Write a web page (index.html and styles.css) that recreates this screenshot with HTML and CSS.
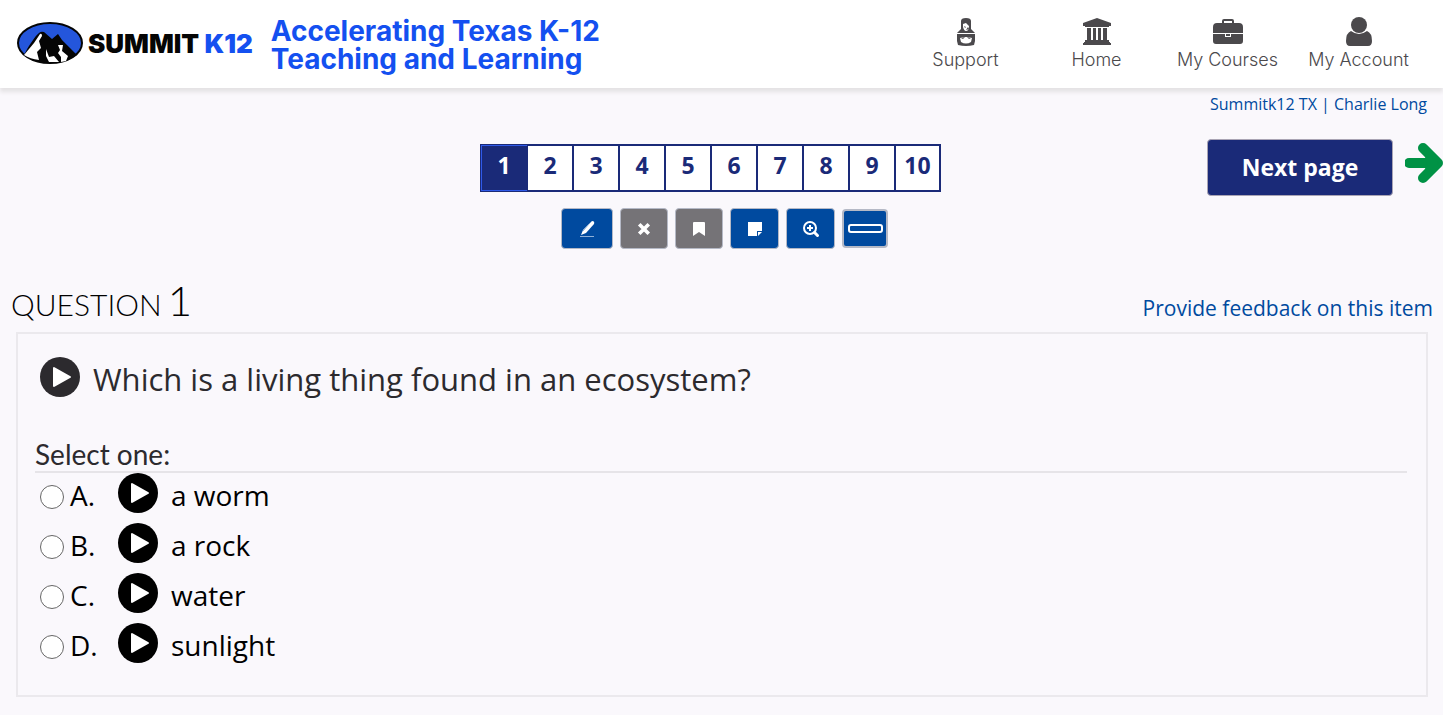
FILE: index.html
```
<!DOCTYPE html>
<html lang="en">
<head>
    <meta charset="UTF-8">
    <meta name="viewport" content="width=device-width, initial-scale=1.0">
    <title>Summit K12 - Question 1</title>
    <link rel="stylesheet" href="styles.css">
</head>
<body>

    <!-- Shared icon shapes -->
    <svg class="sprite" aria-hidden="true">
        <symbol id="icon-play" viewBox="0 0 40 40">
            <circle cx="20" cy="20" r="20" fill="currentColor"/>
            <path d="M14 11v18l16-9z" fill="#fff" stroke="#fff" stroke-width="2" stroke-linejoin="round"/>
        </symbol>
    </svg>

    <header class="header">
        <a href="#" class="brand">
            <svg class="brand-logo" viewBox="0 0 66 44" aria-hidden="true">
                <ellipse cx="33" cy="21" rx="32" ry="20" fill="#2456dc" stroke="#050505" stroke-width="2"/>
                <path d="M7 33C11 25 18 14 22 11Q24 9 27 10L35 17L41 12L45 18L60 33Q47 42 33 41Q16 41 7 33Z" fill="#050505"/>
                <path d="M7 33L17 21L23 12Q25 11 25 14L22 19L24 26L20 30L22 38Q13 37 7 33Z" fill="#fff"/>
                <path d="M29 27L32 35L37 34L42 40L32 40L29 34Z" fill="#fff"/>
                <path d="M41 23L46 23L45 29L51 34L49 39L44 40L44 35L41 31L43 28Z" fill="#fff"/>
            </svg>
            <span class="brand-name">SUMMIT <span class="brand-accent">K12</span></span>
        </a>
        <p class="tagline">Accelerating Texas K-12<br>Teaching and Learning</p>

        <nav class="main-nav">
            <a href="#">
                <svg viewBox="0 0 30 30" aria-hidden="true">
                    <path fill="currentColor" fill-rule="evenodd" d="M10 4Q10 1 15 1Q20 1 20 4L20 12L24 16H6L10 12ZM12 7V10Q13 14 15 14Q18 14 18 9L15 6Z"/>
                    <path fill="currentColor" d="M13 9l2 1-1 1zM17 10l1 2-3 1z"/>
                    <path fill="currentColor" fill-rule="evenodd" d="M6 17H24V24L23 28Q15 30 7 28L6 24ZM9 21L10 25Q15 28 20 25L21 21Q15 19 9 21Z"/>
                    <path fill="currentColor" d="M10 21l4-1-2 2zM20 21l-4-1 2 2z"/>
                </svg>
                Support
            </a>
            <a href="#">
                <svg viewBox="0 0 30 30" aria-hidden="true">
                    <path fill="currentColor" d="M15 1L29 6V9H27V10H3V9H1V6ZM5 11h4v12h2V11h3v12h2V11h3v12h2V11h4v12h2v2H3v-2h2zM2 25h26v1h1v2H1v-2h1z"/>
                </svg>
                Home
            </a>
            <a href="#">
                <svg viewBox="0 0 30 30" aria-hidden="true">
                    <path fill="currentColor" fill-rule="evenodd" d="M9 6V4Q9 2 11 2H19Q21 2 21 4V6H26Q30 6 30 10V16H0V10Q0 6 4 6ZM11 4V6H19V4Z"/>
                    <path fill="currentColor" d="M0 17H12V20H18V17H30V24Q30 27 27 27H3Q0 27 0 24ZM13 17h4v2h-4z"/>
                </svg>
                My Courses
            </a>
            <a href="#">
                <svg viewBox="0 0 30 30" aria-hidden="true">
                    <circle cx="15" cy="8" r="8" fill="currentColor"/>
                    <path fill="currentColor" d="M7 14Q15 20 23 14Q28 16 28 24Q28 29 24 29H6Q2 29 2 24Q2 16 7 14Z"/>
                </svg>
                My Account
            </a>
        </nav>
    </header>

    <div class="user-links">
        <a href="#">Summitk12 TX</a> | <a href="#">Charlie Long</a>
    </div>

    <div class="quiz-bar">
        <div class="quiz-controls">
            <div class="pages">
                <button type="button" class="active">1</button>
                <button type="button">2</button>
                <button type="button">3</button>
                <button type="button">4</button>
                <button type="button">5</button>
                <button type="button">6</button>
                <button type="button">7</button>
                <button type="button">8</button>
                <button type="button">9</button>
                <button type="button">10</button>
            </div>
            <div class="tools">
                <button type="button" class="tool" aria-label="Highlight">
                    <svg viewBox="0 0 18 18" aria-hidden="true">
                        <path d="M14 1Q17 1 16 4L8 13L3 15L5 10Z" fill="#fff"/>
                        <path d="M5 11l6-7" stroke="#8fb0d8" stroke-width="1"/>
                        <path d="M2 16.500h14" stroke="#8fb0d8" stroke-width="1"/>
                    </svg>
                </button>
                <button type="button" class="tool gray" aria-label="Clear">
                    <svg viewBox="0 0 18 18" aria-hidden="true">
                        <path d="M5.500 5.500l7 7M12.500 5.500l-7 7" stroke="#fff" stroke-width="3.600" stroke-linecap="square"/>
                    </svg>
                </button>
                <button type="button" class="tool gray" aria-label="Bookmark">
                    <svg viewBox="0 0 18 18" aria-hidden="true">
                        <path d="M4 2h10q1 0 1 1v13l-6-4-6 4V3q0-1 1-1z" fill="#fff"/>
                    </svg>
                </button>
                <button type="button" class="tool" aria-label="Note">
                    <svg viewBox="0 0 18 18" aria-hidden="true">
                        <path d="M2 2h14v9h-5v5H2zM12 12h4l-4 4z" fill="#fff"/>
                    </svg>
                </button>
                <button type="button" class="tool" aria-label="Zoom in">
                    <svg viewBox="0 0 18 18" aria-hidden="true">
                        <circle cx="8" cy="8" r="6" fill="none" stroke="#fff" stroke-width="2"/>
                        <path d="M8 5v6M5 8h6" stroke="#fff" stroke-width="2"/>
                        <path d="M12.500 12.500l3 3" stroke="#fff" stroke-width="3" stroke-linecap="round"/>
                    </svg>
                </button>
                <button type="button" class="tool line-reader" aria-label="Line reader">
                    <span class="reader-bar"></span>
                </button>
            </div>
        </div>
        <div class="next">
            <button type="button" class="next-button">Next page</button>
            <svg class="next-arrow" viewBox="0 0 38 40" aria-hidden="true">
                <path d="M4 20h28M18 5l15 15-15 15" fill="none" stroke="#009245" stroke-width="10" stroke-linecap="round" stroke-linejoin="round"/>
                <path d="M18 7l16 13-16 13 4-13z" fill="#009245"/>
            </svg>
        </div>
    </div>

    <main>
        <div class="question-header">
            <h1>QUESTION <span>1</span></h1>
            <a href="#">Provide feedback on this item</a>
        </div>

        <form class="question">
            <div class="question-text">
                <button type="button" class="play" aria-label="Play question"><svg aria-hidden="true"><use href="#icon-play"/></svg></button>
                <p>Which is a living thing found in an ecosystem?</p>
            </div>

            <fieldset class="answers">
                <legend>Select one:</legend>
                <div class="answer">
                    <input type="radio" name="answer" id="answer-a">
                    <label for="answer-a" class="letter">A.</label>
                    <button type="button" class="play" aria-label="Play answer A"><svg aria-hidden="true"><use href="#icon-play"/></svg></button>
                    <label for="answer-a">a worm</label>
                </div>
                <div class="answer">
                    <input type="radio" name="answer" id="answer-b">
                    <label for="answer-b" class="letter">B.</label>
                    <button type="button" class="play" aria-label="Play answer B"><svg aria-hidden="true"><use href="#icon-play"/></svg></button>
                    <label for="answer-b">a rock</label>
                </div>
                <div class="answer">
                    <input type="radio" name="answer" id="answer-c">
                    <label for="answer-c" class="letter">C.</label>
                    <button type="button" class="play" aria-label="Play answer C"><svg aria-hidden="true"><use href="#icon-play"/></svg></button>
                    <label for="answer-c">water</label>
                </div>
                <div class="answer">
                    <input type="radio" name="answer" id="answer-d">
                    <label for="answer-d" class="letter">D.</label>
                    <button type="button" class="play" aria-label="Play answer D"><svg aria-hidden="true"><use href="#icon-play"/></svg></button>
                    <label for="answer-d">sunlight</label>
                </div>
            </fieldset>
        </form>
    </main>

</body>
</html>
```
FILE: styles.css
```
* {
    box-sizing: border-box;
}

body {
    margin: 0;
    background: #faf8fc;
    color: #000;
    font-family: "Open Sans", sans-serif;
}

a {
    color: #004a9f;
    text-decoration: none;
}

button {
    padding: 0;
    font-family: inherit;
    cursor: pointer;
}

.sprite {
    display: none;
}

/* Header */
.header {
    display: flex;
    align-items: center;
    height: 88px;
    padding: 0 19px 0 17px;
    background: #fff;
    box-shadow: 0 4px 4px #e4e2e4;
}

.brand {
    display: flex;
    align-items: center;
    gap: 5px;
}

.brand-logo {
    width: 66px;
    height: 44px;
}

.brand-name {
    color: #050505;
    font-family: Inter, sans-serif;
    font-size: 26px;
    font-weight: 900;
    line-height: 32px;
    white-space: nowrap;
}

.brand-accent {
    color: #1450f0;
}

.tagline {
    margin: 2px 0 0 18px;
    color: #1450f0;
    font-family: Inter, sans-serif;
    font-size: 28px;
    font-weight: 700;
    line-height: 28px;
    white-space: nowrap;
}

.main-nav {
    display: flex;
    margin-left: auto;
}

.main-nav a {
    display: flex;
    flex-direction: column;
    align-items: center;
    width: 131px;
    padding-top: 2px;
    color: #4b494c;
    font-family: Inter, sans-serif;
    font-size: 18px;
    font-weight: 300;
    line-height: 26px;
    white-space: nowrap;
}

.main-nav svg {
    width: 30px;
    height: 30px;
}

.user-links {
    padding: 6px 16px 0 0;
    color: #004a9f;
    font-size: 16px;
    line-height: 20px;
    text-align: right;
}

/* Page numbers, tools and next button */
.quiz-bar {
    display: grid;
    grid-template-columns: 1fr auto 1fr;
    padding-top: 25px;
}

.quiz-controls {
    grid-column: 2;
    margin: 5px 22px 0 0;
}

.pages {
    display: flex;
    border: 2px solid #1a2a78;
}

.pages button {
    width: 46px;
    height: 44px;
    padding-bottom: 6px;
    border: 0;
    border-left: 2px solid #1a2a78;
    background: #fff;
    color: #1a2a78;
    font-size: 23px;
    font-weight: 700;
}

.pages button:first-child {
    width: 44px;
    border-left: 0;
}

.pages button:last-child {
    width: 45px;
}

.pages .active {
    background: #1a2a78;
    color: #fff;
    box-shadow: 0 0 0 1px #2f5ae8;
}

.tools {
    display: flex;
    justify-content: center;
    align-items: center;
    gap: 7px;
    margin: 16px 0 0 28px;
}

.tool {
    display: flex;
    justify-content: center;
    align-items: center;
    width: 49px;
    height: 41px;
    border: 1px solid #b5b9c6;
    border-radius: 4px;
    background: #004a9f;
}

.tool:first-child {
    width: 52px;
}

.tool.gray {
    width: 48px;
    background: #757377;
}

.tool svg {
    width: 18px;
    height: 18px;
}

.tool.line-reader {
    width: 46px;
    height: 39px;
    border-width: 2px;
}

.reader-bar {
    width: 35px;
    height: 9px;
    border: 2px solid #fff;
    border-radius: 3px;
}

.next {
    display: flex;
    justify-content: flex-end;
    align-items: flex-start;
    gap: 12px;
}

.next-button {
    width: 186px;
    height: 57px;
    padding-bottom: 2px;
    border: 1px solid #a9a4b4;
    border-radius: 4px;
    background: #1a2a78;
    color: #fff;
    font-size: 23px;
    font-weight: 700;
}

.next-arrow {
    width: 38px;
    height: 40px;
    margin-top: 4px;
}

/* Question */
.question-header {
    display: flex;
    justify-content: space-between;
    align-items: baseline;
    padding: 25px 10px 0 11px;
}

.question-header h1 {
    margin: 0;
    font-family: Lato, sans-serif;
    font-size: 30px;
    font-weight: 300;
    line-height: 52px;
}

.question-header h1 span {
    margin-left: -2px;
    font-size: 42px;
}

.question-header a {
    font-size: 21px;
}

.question {
    margin: 2px 15px 18px 16px;
    padding: 23px 19px 22px 17px;
    border: 2px solid #ebe9ed;
}

.play {
    width: 40px;
    height: 40px;
    border: 0;
    border-radius: 50%;
    background: none;
    color: inherit;
}

.play svg {
    display: block;
    width: 40px;
    height: 40px;
}

.question-text {
    display: flex;
    align-items: flex-start;
    gap: 13px;
    padding-left: 5px;
    color: #2c2a2e;
}

.question-text p {
    margin: 0;
    font-size: 31px;
    line-height: 44px;
}

.answers {
    margin: 36px 0 0;
    padding: 0;
    border: 0;
}

.answers legend {
    width: 100%;
    padding: 0;
    border-bottom: 2px solid #e6e4e8;
    color: #2c2a2e;
    font-family: Lato, sans-serif;
    font-size: 28px;
    line-height: 34px;
}

.answer {
    display: flex;
    align-items: flex-start;
    height: 50px;
    padding-left: 5px;
    font-size: 28px;
    line-height: 44px;
}

.answer input {
    appearance: none;
    width: 24px;
    height: 24px;
    margin: 12px 6px 0 0;
    border: 1px solid #666;
    border-radius: 50%;
    background: #fff;
}

.answer input:checked {
    border: 7px solid #004a9f;
}

.answer .letter {
    width: 48px;
}

.answer .play {
    margin-right: 13px;
}
```
